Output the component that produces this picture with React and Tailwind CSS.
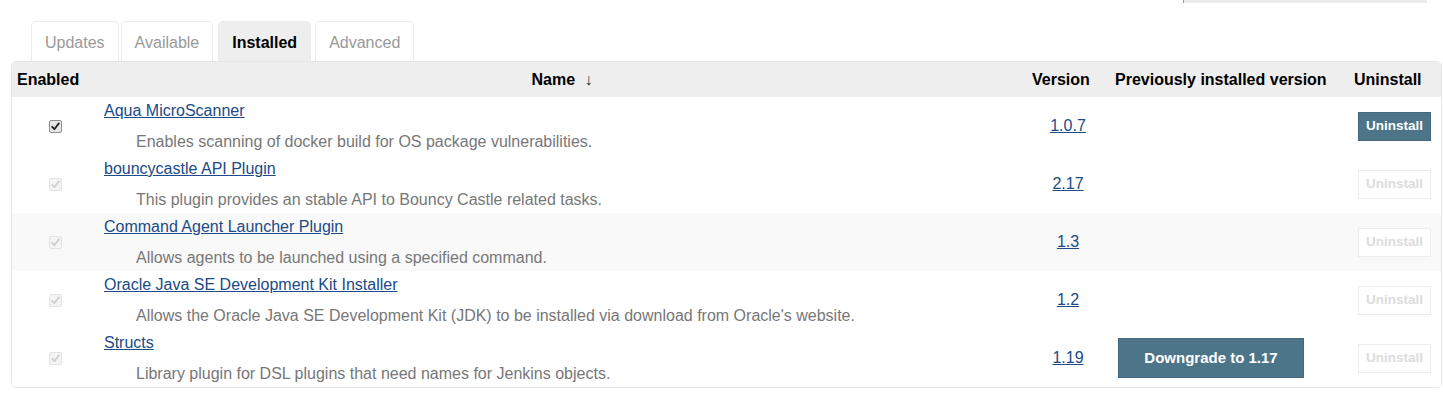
import React from "react";

const plugins = [
  { name: "Aqua MicroScanner", desc: "Enables scanning of docker build for OS package vulnerabilities.", version: "1.0.7", enabled: true, canUninstall: true },
  { name: "bouncycastle API Plugin", desc: "This plugin provides an stable API to Bouncy Castle related tasks.", version: "2.17" },
  { name: "Command Agent Launcher Plugin", desc: "Allows agents to be launched using a specified command.", version: "1.3", shaded: true },
  { name: "Oracle Java SE Development Kit Installer", desc: "Allows the Oracle Java SE Development Kit (JDK) to be installed via download from Oracle's website.", version: "1.2" },
  { name: "Structs", desc: "Library plugin for DSL plugins that need names for Jenkins objects.", version: "1.19", downgrade: "1.17" },
];

function Check({ active }) {
  return (
    <span
      className={
        "inline-flex items-center justify-center w-[13px] h-[13px] rounded-[2px] border " +
        (active ? "border-[#8f8f8f] bg-[#e6e6e6]" : "border-[#e3e3e3] bg-[#f4f4f4]")
      }
    >
      <svg width="9" height="9" viewBox="0 0 9 9">
        <path
          d="M1.2 4.8 L3.4 7.2 L7.8 1.4"
          fill="none"
          stroke={active ? "#222" : "#cfcfcf"}
          strokeWidth="1.8"
          strokeLinecap="round"
          strokeLinejoin="round"
        />
      </svg>
    </span>
  );
}

export default function App() {
  return (
    <div className="w-[1443px] h-[420px] bg-white font-['Liberation_Sans',Arial,sans-serif] text-[16px] text-black">
      <div className="flex justify-end h-[21px]">
        <div className="w-[244px] h-[3px] mr-[16px] bg-[#ececec] border-l border-[#999]" />
      </div>
      <div className="flex pl-[31px] h-[40px]">
        <div className="h-[40px] px-[13px] pt-[2px] border border-b-0 border-[#ececec] rounded-t-[5px] flex items-center text-[#999]">Updates</div>
        <div className="h-[40px] px-[13px] pt-[2px] ml-[2px] border border-b-0 border-[#ececec] rounded-t-[5px] flex items-center text-[#999]">Available</div>
        <div className="h-[40px] px-[13px] pt-[2px] ml-[5px] border border-b-0 border-[#ececec] bg-[#eeeeee] rounded-t-[5px] flex items-center font-bold text-black">Installed</div>
        <div className="h-[40px] px-[13px] pt-[2px] ml-[4px] border border-b-0 border-[#ececec] rounded-t-[5px] flex items-center text-[#999]">Advanced</div>
      </div>
      <div className="ml-[11px] w-[1431px] border border-[#e6e6e6] rounded-[5px] overflow-hidden">
        <table className="w-full table-fixed border-collapse">
          <colgroup>
            <col className="w-[87px]" />
            <col className="w-[926px]" />
            <col className="w-[84px]" />
            <col className="w-[239px]" />
            <col className="w-[93px]" />
          </colgroup>
          <thead>
            <tr className="h-[35px] bg-[#eeeeee] font-bold">
              <th className="text-left pl-[5px] font-bold">Enabled</th>
              <th className="text-center font-bold">
                Name <span className="font-normal text-[#333] ml-[5px]">↓</span>
              </th>
              <th className="text-left pl-[7px] font-bold">Version</th>
              <th className="text-left pl-[6px] font-bold whitespace-nowrap">Previously installed version</th>
              <th className="text-left pl-[6px] font-bold">Uninstall</th>
            </tr>
          </thead>
          <tbody>
            {plugins.map((p) => (
              <tr key={p.name} className={"h-[58px] " + (p.shaded ? "bg-[#f9f9f9]" : "bg-white")}>
                <td className="text-center align-middle">
                  <div className="flex justify-center pt-[1px]">
                    <Check active={!!p.enabled} />
                  </div>
                </td>
                <td className="align-top pt-[4px] pb-[3px]">
                  <div className="pl-[5px] leading-[20px]">
                    <a href="#" className="text-[#204a87] underline">{p.name}</a>
                  </div>
                  <div className="pl-[37px] mt-[11px] leading-[20px] text-[#777] whitespace-nowrap">{p.desc}</div>
                </td>
                <td className="text-center align-middle pl-[2px]">
                  <a href="#" className="text-[#204a87] underline">{p.version}</a>
                </td>
                <td className="align-middle pl-[9px]">
                  {p.downgrade && (
                    <button className="h-[40px] w-[186px] bg-[#4d758a] border border-[#45697c] text-white font-bold text-[15px]">
                      Downgrade to {p.downgrade}
                    </button>
                  )}
                </td>
                <td className="align-middle pl-[10px]">
                  {p.canUninstall ? (
                    <button className="h-[29px] w-[73px] bg-[#4d758a] border border-[#45697c] text-white font-bold text-[13.5px]">
                      Uninstall
                    </button>
                  ) : (
                    <button className="h-[29px] w-[73px] bg-white border border-[#ececec] text-[#dcdcdc] font-bold text-[13.5px]">
                      Uninstall
                    </button>
                  )}
                </td>
              </tr>
            ))}
          </tbody>
        </table>
      </div>
    </div>
  );
}
